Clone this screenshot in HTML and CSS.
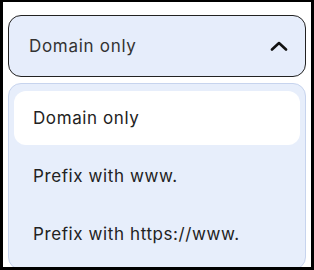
FILE: index.html
```html
<!DOCTYPE html>
<html lang="en">
<head>
    <meta charset="UTF-8">
    <title>Format select</title>
    <link rel="stylesheet" href="styles.css">
</head>
<body>
    <div class="frame">
        <button class="select" type="button">
            <span class="select-label">Domain only</span>
            <svg class="chevron" width="18" height="10" viewBox="0 0 18 10">
                <path d="M2 8.5 L9 2 L16 8.5" fill="none" stroke="#111" stroke-width="2.6" stroke-linecap="round" stroke-linejoin="round"/>
            </svg>
        </button>
        <ul class="menu">
            <li class="option selected">Domain only</li>
            <li class="option">Prefix with www.</li>
            <li class="option">Prefix with https://www.</li>
        </ul>
    </div>
</body>
</html>
```

FILE: styles.css
```css
html, body {
    margin: 0;
    padding: 0;
}
body {
    font-family: Inter, "Open Sans", sans-serif;
    background-color: #fff;
}
.frame {
    box-sizing: border-box;
    width: 314px;
    height: 270px;
    border: 3px solid #000;
    border-top-width: 2px;
    padding: 13px 5px 0 5px;
    overflow: hidden;
}
.select {
    box-sizing: border-box;
    display: flex;
    align-items: center;
    justify-content: space-between;
    width: 100%;
    height: 62px;
    padding: 0 17px 0 20px;
    background-color: #e6edfb;
    border: 1px solid #222;
    border-radius: 13px;
    font-family: inherit;
    font-size: 17px;
    letter-spacing: 0.7px;
    color: #333;
    cursor: pointer;
}
.chevron {
    display: block;
}
.menu {
    list-style: none;
    margin: 6px 0 0 0;
    padding: 7px 5px 8px 5px;
    background-color: #e7eefb;
    border: 1px solid #c7d4ee;
    border-radius: 13px;
    display: flex;
    flex-direction: column;
    gap: 4px;
}
.option {
    height: 54px;
    display: flex;
    align-items: center;
    padding: 0 19px;
    border-radius: 12px;
    font-size: 17px;
    letter-spacing: 0.6px;
    color: #222;
}
.option.selected {
    background-color: #fff;
}
```
